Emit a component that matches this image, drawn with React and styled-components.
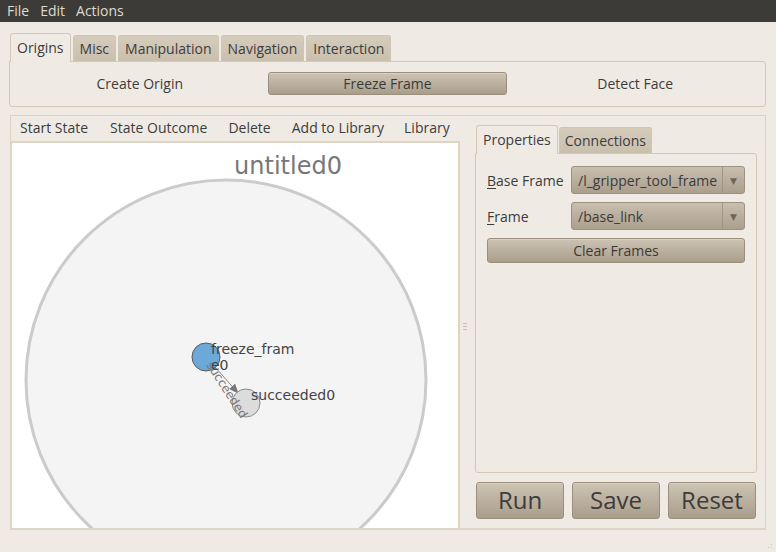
import React from "react";
import styled, { createGlobalStyle, css } from "styled-components";

const Global = createGlobalStyle`
  html, body { margin: 0; padding: 0; }
  body {
    background: #efebe4;
    font-family: "Open Sans", "DejaVu Sans", sans-serif;
    font-size: 14px;
    color: #3c3c3c;
  }
`;

const Window = styled.div`
  width: 776px;
  height: 552px;
  display: flex;
  flex-direction: column;
  background: #efebe4;
  overflow: hidden;
`;

const MenuBar = styled.div`
  height: 22px;
  background: #3c3b37;
  display: flex;
  align-items: center;
  padding-left: 7px;
  gap: 11px;
`;

const MenuItem = styled.span`
  color: #dfdbd2;
  font-size: 14px;
  line-height: 22px;
`;

const TopNotebook = styled.div`
  margin: 11px 10px 0 9px;
  display: flex;
  flex-direction: column;
`;

const TabRow = styled.div`
  display: flex;
  align-items: flex-end;
  gap: ${(p) => p.$gap || 2}px;
  padding-left: 1px;
  position: relative;
  z-index: 1;
`;

const Tab = styled.div`
  padding: 0 ${(p) => p.$pad || 6}px;
  display: flex;
  align-items: center;
  border: 1px solid #d3c9b6;
  border-bottom: none;
  border-radius: 3px 3px 0 0;
  box-sizing: border-box;
  font-size: 14px;
  color: #3c3c3c;
  ${(p) =>
    p.$active
      ? css`
          background: #efebe4;
          margin-bottom: -1px;
          height: 29px;
          padding-bottom: 2px;
        `
      : css`
          background: linear-gradient(#d5ccbc, #c9bfad);
          border-color: #cfc5b2;
          height: 26px;
        `}
`;

const TabPanel = styled.div`
  border: 1px solid #d3c9b6;
  border-radius: 0 3px 3px 3px;
  background: #efebe4;
  box-sizing: border-box;
`;

const OriginsPanel = styled(TabPanel)`
  height: 46px;
  display: grid;
  grid-template-columns: 1fr 1fr 1fr;
  align-items: center;
  padding: 0 6px 1px 6px;
`;

const FlatButton = styled.div`
  text-align: center;
  font-size: 14px;
  height: 22px;
  line-height: 22px;
`;

const Button = styled.div`
  display: flex;
  align-items: center;
  justify-content: center;
  box-sizing: border-box;
  height: ${(p) => p.$h || 23}px;
  margin: 0 ${(p) => p.$mx || 0}px;
  font-size: 14px;
  color: #3a3a3a;
  background: linear-gradient(#cdc3b3, #aa9e8b);
  border: 1px solid #9a8e7c;
  border-radius: 3px;
  box-shadow: inset 0 1px 0 rgba(255, 255, 255, 0.25);
`;

const Frame = styled.div`
  margin: 8px 10px 0 10px;
  height: 415px;
  border: 1px solid #dcd4c4;
  border-bottom: 2px solid #dcd4c4;
  box-sizing: border-box;
  display: flex;
`;

const LeftColumn = styled.div`
  width: 449px;
  display: flex;
  flex-direction: column;
`;

const ToolBar = styled.div`
  height: 25px;
  box-sizing: border-box;
  padding: 0 0 2px 9px;
  display: flex;
  align-items: center;
`;

const ToolItem = styled.span`
  font-size: 14px;
  margin-right: ${(p) => p.$mr}px;
`;

const Canvas = styled.div`
  flex: 1;
  background: #ffffff;
  border: 2px solid #ddd4c2;
  border-left-width: 1px;
  border-bottom: none;
  overflow: hidden;
`;

const Divider = styled.div`
  width: 15px;
  display: flex;
  align-items: center;
  padding-left: 3px;
  box-sizing: border-box;
`;

const Grip = styled.div`
  display: flex;
  flex-direction: column;
  gap: 2px;
  margin-top: 8px;
  span {
    width: 4px;
    height: 1px;
    background: #c8bfae;
  }
`;

const RightPane = styled.div`
  width: 282px;
  display: flex;
  flex-direction: column;
  padding-top: 9px;
`;

const PropsPanel = styled(TabPanel)`
  height: 320px;
  padding: 12px 11px 0 11px;
  display: flex;
  flex-direction: column;
  gap: 8px;
`;

const FieldRow = styled.div`
  display: flex;
  align-items: center;
  height: 28px;
`;

const FieldLabel = styled.div`
  width: 84px;
  font-size: 14px;
  u {
    text-decoration: underline;
    text-underline-offset: 2px;
  }
`;

const Combo = styled.div`
  width: 174px;
  height: 28px;
  box-sizing: border-box;
  display: flex;
  background: linear-gradient(#c9bfaf, #ab9f8c);
  border: 1px solid #9d917f;
  border-radius: 3px;
  font-size: 14px;
  color: #3a3a3a;
`;

const ComboText = styled.div`
  flex: 1;
  padding-left: 6px;
  display: flex;
  align-items: center;
  white-space: nowrap;
  overflow: hidden;
`;

const ComboArrow = styled.div`
  width: 21px;
  flex: none;
  border-left: 1px solid #a09482;
  display: flex;
  align-items: center;
  justify-content: center;
  font-size: 9px;
  color: #6d665b;
`;

const ActionRow = styled.div`
  display: flex;
  gap: 8px;
  margin-top: 9px;
  padding-left: 1px;
`;

const BigButton = styled(Button)`
  width: 88px;
  height: 37px;
  font-size: 24px;
  color: #3c3c3c;
  padding-bottom: 2px;
`;

const StatusBar = styled.div`
  flex: 1;
  position: relative;
`;

const ResizeGrip = styled.div`
  position: absolute;
  right: 2px;
  bottom: 2px;
  width: 10px;
  height: 10px;
  background-image: radial-gradient(circle, #d0c8b8 0.8px, transparent 1px);
  background-size: 3px 3px;
  clip-path: polygon(100% 0, 100% 100%, 0 100%);
`;

function Diagram() {
  return (
    <svg width="448" height="386" viewBox="11 142 448 386" style={{ display: "block" }}>
      <defs>
        <marker id="ah" markerWidth="10" markerHeight="8" refX="9" refY="4" orient="auto" markerUnits="userSpaceOnUse">
          <path d="M0,0 L10,4 L0,8 Z" fill="#777" />
        </marker>
      </defs>
      <text x="287" y="173" textAnchor="middle" fontFamily="DejaVu Sans, sans-serif" fontSize="24" fill="#777">
        untitled0
      </text>
      <circle cx="225" cy="379" r="200" fill="#f4f4f4" stroke="#cbcbcb" strokeWidth="3" />
      <line x1="207" y1="358" x2="237" y2="392" stroke="#888" strokeWidth="1" markerEnd="url(#ah)" />
      <circle cx="245" cy="402" r="14" fill="#dcdcdc" stroke="#8a8a8a" strokeWidth="1" />
      <circle cx="205" cy="356" r="14" fill="#6ca8d8" stroke="#5a5a5a" strokeWidth="1" />
      <text
        x="0"
        y="0"
        transform="translate(205 364) rotate(57)"
        fontFamily="DejaVu Sans, sans-serif"
        fontSize="12"
        fill="#777"
      >
        succeeded
      </text>
      <g fontFamily="DejaVu Sans, sans-serif" fontSize="14" fill="#444">
        <text x="210" y="353">freeze_fram</text>
        <text x="210" y="369">e0</text>
        <text x="250" y="399">succeeded0</text>
      </g>
    </svg>
  );
}

export default function App() {
  return (
    <>
      <Global />
      <Window>
        <MenuBar>
          <MenuItem>File</MenuItem>
          <MenuItem>Edit</MenuItem>
          <MenuItem>Actions</MenuItem>
        </MenuBar>

        <TopNotebook>
          <TabRow>
            <Tab $active>Origins</Tab>
            <Tab>Misc</Tab>
            <Tab>Manipulation</Tab>
            <Tab>Navigation</Tab>
            <Tab>Interaction</Tab>
          </TabRow>
          <OriginsPanel>
            <FlatButton>Create Origin</FlatButton>
            <Button $h={23} $mx={4}>Freeze Frame</Button>
            <FlatButton>Detect Face</FlatButton>
          </OriginsPanel>
        </TopNotebook>

        <Frame>
          <LeftColumn>
            <ToolBar>
              <ToolItem $mr={22}>Start State</ToolItem>
              <ToolItem $mr={21}>State Outcome</ToolItem>
              <ToolItem $mr={21}>Delete</ToolItem>
              <ToolItem $mr={20}>Add to Library</ToolItem>
              <ToolItem $mr={0}>Library</ToolItem>
            </ToolBar>
            <Canvas>
              <Diagram />
            </Canvas>
          </LeftColumn>
          <Divider>
            <Grip>
              <span />
              <span />
              <span />
            </Grip>
          </Divider>
          <RightPane>
            <TabRow $gap={1}>
              <Tab $active $pad={6}>Properties</Tab>
              <Tab $pad={5}>Connections</Tab>
            </TabRow>
            <PropsPanel>
              <FieldRow>
                <FieldLabel>
                  <u>B</u>ase Frame
                </FieldLabel>
                <Combo>
                  <ComboText>/l_gripper_tool_frame</ComboText>
                  <ComboArrow>▼</ComboArrow>
                </Combo>
              </FieldRow>
              <FieldRow>
                <FieldLabel>
                  <u>F</u>rame
                </FieldLabel>
                <Combo>
                  <ComboText>/base_link</ComboText>
                  <ComboArrow>▼</ComboArrow>
                </Combo>
              </FieldRow>
              <Button $h={25}>Clear Frames</Button>
            </PropsPanel>
            <ActionRow>
              <BigButton>Run</BigButton>
              <BigButton>Save</BigButton>
              <BigButton>Reset</BigButton>
            </ActionRow>
          </RightPane>
        </Frame>

        <StatusBar>
          <ResizeGrip />
        </StatusBar>
      </Window>
    </>
  );
}
